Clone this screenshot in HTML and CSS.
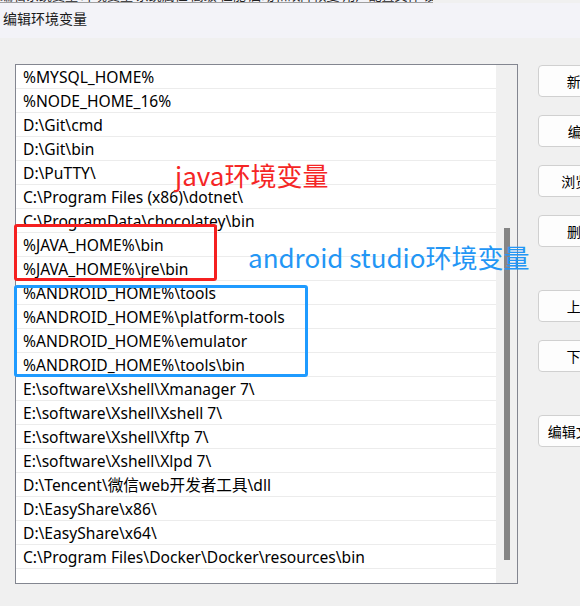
FILE: index.html
```html
<!DOCTYPE html>
<html lang="zh-CN">
<head>
<meta charset="utf-8">
<title>编辑环境变量</title>
<link rel="stylesheet" href="styles.css">
</head>
<body>
<div class="window">
  <div class="topstrip"><span class="clipped">编辑系统变量 环境变量 系统属性 高级 性能 启动和故障恢复 用户配置文件 设置</span></div>
  <div class="titlebar">编辑环境变量</div>
  <div class="content">
    <div class="listbox">
      <ul class="rows">
        <li>%MYSQL_HOME%</li>
        <li>%NODE_HOME_16%</li>
        <li>D:\Git\cmd</li>
        <li>D:\Git\bin</li>
        <li>D:\PuTTY\</li>
        <li>C:\Program Files (x86)\dotnet\</li>
        <li>C:\ProgramData\chocolatey\bin</li>
        <li>%JAVA_HOME%\bin</li>
        <li>%JAVA_HOME%\jre\bin</li>
        <li>%ANDROID_HOME%\tools</li>
        <li>%ANDROID_HOME%\platform-tools</li>
        <li>%ANDROID_HOME%\emulator</li>
        <li>%ANDROID_HOME%\tools\bin</li>
        <li>E:\software\Xshell\Xmanager 7\</li>
        <li>E:\software\Xshell\Xshell 7\</li>
        <li>E:\software\Xshell\Xftp 7\</li>
        <li>E:\software\Xshell\Xlpd 7\</li>
        <li>D:\Tencent\微信web开发者工具\dll</li>
        <li>D:\EasyShare\x86\</li>
        <li>D:\EasyShare\x64\</li>
        <li>C:\Program Files\Docker\Docker\resources\bin</li>
      </ul>
      <div class="scrollbar"><div class="thumb"></div></div>
    </div>
    <div class="buttons">
      <button class="btn">新建(N)</button>
      <button class="btn">编辑(E)</button>
      <button class="btn">浏览(B)...</button>
      <button class="btn">删除(D)</button>
      <button class="btn btn-group">上移(U)</button>
      <button class="btn">下移(O)</button>
      <button class="btn btn-group">编辑文本(T)...</button>
    </div>
  </div>
  <div class="mark mark-red"></div>
  <div class="mark mark-blue"></div>
  <div class="label label-red">java环境变量</div>
  <div class="label label-blue">android studio环境变量</div>
</div>
</body>
</html>
```
FILE: styles.css
```css
html, body {
  margin: 0;
  padding: 0;
}
body {
  width: 580px;
  height: 606px;
  overflow: hidden;
  background: #f0f0f0;
  font-family: "Noto Sans", "Noto Sans CJK SC", sans-serif;
  color: #000;
}
.window {
  position: relative;
  width: 580px;
  height: 606px;
}
.topstrip {
  height: 2px;
  overflow: hidden;
  border-bottom: 1px solid #a0a0a0;
  background: #f3f3f8;
  width: 433px;
}
.clipped {
  display: block;
  margin-top: -12px;
  font-size: 13px;
  line-height: 13px;
  white-space: nowrap;
  color: #222;
  font-family: "Noto Sans CJK SC", sans-serif;
}
.titlebar {
  height: 35px;
  background: #f3f3f8;
  padding-left: 3px;
  font-family: "Noto Sans CJK SC", sans-serif;
  font-size: 14px;
  line-height: 31px;
  color: #1a1a1a;
}
.content {
  display: flex;
  padding: 26px 0 0 15px;
}
.listbox {
  display: flex;
  width: 504px;
  height: 520px;
  box-sizing: border-box;
  border: 1px solid #838690;
  background: #fff;
}
.rows {
  list-style: none;
  margin: 0;
  padding: 0;
  width: 480px;
}
.rows li {
  height: 23px;
  border-bottom: 1px solid #ececec;
  padding-left: 7px;
  font-size: 15.6px;
  line-height: 25px;
  white-space: nowrap;
  overflow: hidden;
}
.scrollbar {
  width: 21px;
  background: #f0f0f0;
  position: relative;
}
.thumb {
  position: absolute;
  left: 8px;
  top: 163px;
  width: 6px;
  height: 332px;
  background: #858585;
}
.buttons {
  display: flex;
  flex-direction: column;
  margin-left: 20px;
  padding-top: 1px;
  gap: 18px;
}
.btn {
  width: 105px;
  height: 32px;
  flex: none;
  box-sizing: border-box;
  border: 1px solid #d0d0d0;
  border-radius: 4px;
  background: #fdfdfd;
  font-family: "Noto Sans CJK SC", sans-serif;
  font-size: 14px;
  color: #000;
  padding: 0;
}
.btn-group {
  margin-top: 25px;
}
.mark {
  position: absolute;
  box-sizing: border-box;
  border: 3px solid;
  border-radius: 3px;
}
.mark-red {
  left: 14px;
  top: 224px;
  width: 203px;
  height: 57px;
  border-color: #f52020;
}
.mark-blue {
  left: 14px;
  top: 285px;
  width: 294px;
  height: 92px;
  border-color: #1f9bff;
}
.label {
  position: absolute;
  font-family: "Noto Sans CJK SC", sans-serif;
  font-size: 26px;
  line-height: 30px;
  white-space: nowrap;
}
.label-red {
  left: 175px;
  top: 160px;
  color: #f52525;
}
.label-blue {
  left: 248px;
  top: 242px;
  color: #2396f5;
}
```
